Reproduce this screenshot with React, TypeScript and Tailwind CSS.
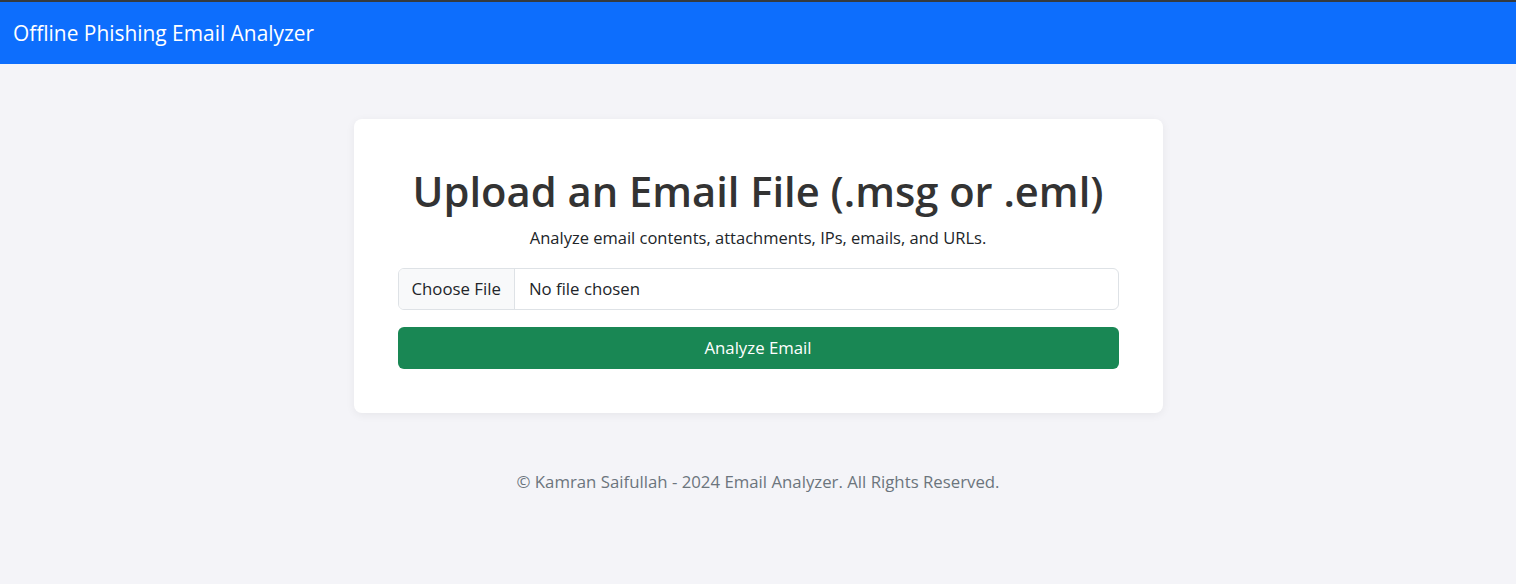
export default function App() {
  return (
    <div className="min-h-[584px] bg-[#f4f4f8] text-[#212529] font-['Open_Sans',sans-serif]">
      {/* Navbar */}
      <nav className="border-t-2 border-[#343a40] bg-[#0d6efd] h-[64px] flex items-center px-[13px]">
        <span className="text-white text-[20.9px] leading-none">Offline Phishing Email Analyzer</span>
      </nav>

      {/* Upload card */}
      <main className="pt-[55px] flex flex-col items-center">
        <div className="w-[809px] bg-white rounded-lg shadow-[0_2px_10px_rgba(0,0,0,0.06)] p-[44px] text-center">
          <h1 className="text-[41.7px] leading-[56px] font-semibold text-[#333]">
            Upload an Email File (.msg or .eml)
          </h1>
          <p className="mt-[7px] text-[16.5px] leading-[24px]">
            Analyze email contents, attachments, IPs, emails, and URLs.
          </p>

          {/* File input */}
          <div className="mt-[18px] h-[42px] flex items-stretch border border-[#dee2e6] rounded-md overflow-hidden text-left text-[16.8px]">
            <span className="bg-[#f8f9fa] border-r border-[#dee2e6] px-[13px] flex items-center">Choose File</span>
            <span className="px-[14px] flex items-center">No file chosen</span>
          </div>

          <button className="mt-[17px] w-full h-[42px] rounded-md bg-[#198754] text-white text-[16.8px]">
            Analyze Email
          </button>
        </div>

        {/* Footer */}
        <footer className="mt-[57px] text-[16.8px] leading-[24px] text-[#6c757d]">
          © Kamran Saifullah - 2024 Email Analyzer. All Rights Reserved.
        </footer>
      </main>
    </div>
  );
}
